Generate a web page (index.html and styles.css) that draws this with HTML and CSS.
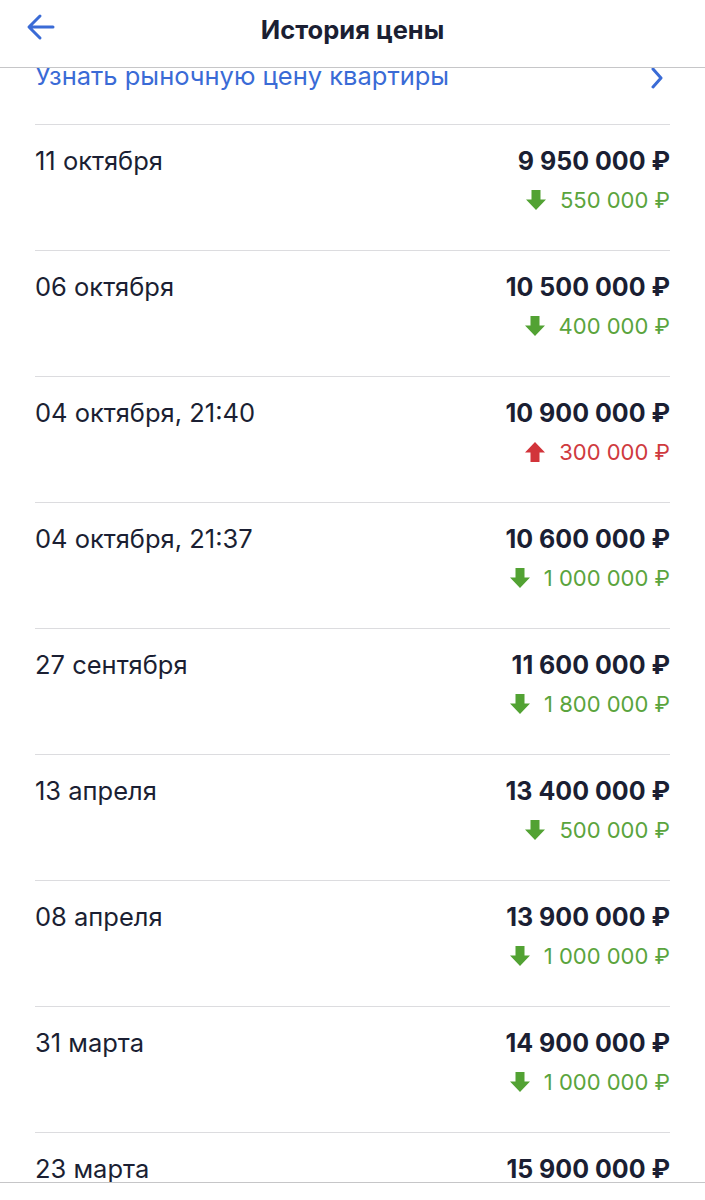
FILE: index.html
```html
<!DOCTYPE html>
<html lang="ru">
<head>
<meta charset="utf-8">
<link rel="stylesheet" href="styles.css">
</head>
<body>
<header class="topbar">
  <svg class="back" viewBox="0 0 30 28" width="30" height="28"><path d="M27 14H4M14 3L3 14l11 11" fill="none" stroke="#3a6bd6" stroke-width="3" stroke-linecap="round" stroke-linejoin="round"/></svg>
  <h1 class="title">История цены</h1>
</header>
<main class="content">
  <div class="link-row">
    <span class="link">Узнать рыночную цену квартиры</span>
    <svg class="chev" viewBox="0 0 14 22" width="14" height="22"><path d="M3 2l8 9-8 9" fill="none" stroke="#3a6bd6" stroke-width="3" stroke-linecap="round" stroke-linejoin="round"/></svg>
  </div>
  <div class="row"><span class="date">11 октября</span><div class="price"><span class="amount">9 950 000 ₽</span><span class="change down"><svg class="ar" viewBox="0 0 22 22"><path d="M6.5 1h9v9.5H21L11 21 1 10.5h5.5z"/></svg>550 000 ₽</span></div></div>
  <div class="row"><span class="date">06 октября</span><div class="price"><span class="amount">10 500 000 ₽</span><span class="change down"><svg class="ar" viewBox="0 0 22 22"><path d="M6.5 1h9v9.5H21L11 21 1 10.5h5.5z"/></svg>400 000 ₽</span></div></div>
  <div class="row"><span class="date">04 октября, 21:40</span><div class="price"><span class="amount">10 900 000 ₽</span><span class="change up"><svg class="ar" viewBox="0 0 22 22"><path d="M6.5 21h9v-9.5H21L11 1 1 11.5h5.5z"/></svg>300 000 ₽</span></div></div>
  <div class="row"><span class="date">04 октября, 21:37</span><div class="price"><span class="amount">10 600 000 ₽</span><span class="change down"><svg class="ar" viewBox="0 0 22 22"><path d="M6.5 1h9v9.5H21L11 21 1 10.5h5.5z"/></svg>1 000 000 ₽</span></div></div>
  <div class="row"><span class="date">27 сентября</span><div class="price"><span class="amount">11 600 000 ₽</span><span class="change down"><svg class="ar" viewBox="0 0 22 22"><path d="M6.5 1h9v9.5H21L11 21 1 10.5h5.5z"/></svg>1 800 000 ₽</span></div></div>
  <div class="row"><span class="date">13 апреля</span><div class="price"><span class="amount">13 400 000 ₽</span><span class="change down"><svg class="ar" viewBox="0 0 22 22"><path d="M6.5 1h9v9.5H21L11 21 1 10.5h5.5z"/></svg>500 000 ₽</span></div></div>
  <div class="row"><span class="date">08 апреля</span><div class="price"><span class="amount">13 900 000 ₽</span><span class="change down"><svg class="ar" viewBox="0 0 22 22"><path d="M6.5 1h9v9.5H21L11 21 1 10.5h5.5z"/></svg>1 000 000 ₽</span></div></div>
  <div class="row"><span class="date">31 марта</span><div class="price"><span class="amount">14 900 000 ₽</span><span class="change down"><svg class="ar" viewBox="0 0 22 22"><path d="M6.5 1h9v9.5H21L11 21 1 10.5h5.5z"/></svg>1 000 000 ₽</span></div></div>
  <div class="row"><span class="date">23 марта</span><div class="price"><span class="amount">15 900 000 ₽</span></div></div>
</main>
<div class="bottombar"></div>
</body>
</html>
```
FILE: styles.css
```css
* { box-sizing: border-box; }
html, body { margin: 0; padding: 0; background: #fff; }
body {
  font-family: Inter, "Noto Sans", sans-serif;
  color: #1b1f33;
  width: 705px;
  height: 1200px;
  overflow: hidden;
  position: relative;
}
.topbar {
  position: relative;
  z-index: 2;
  height: 68px;
  background: #fff;
  border-bottom: 1px solid #c6c6c8;
  display: flex;
  align-items: center;
  justify-content: center;
}
.back {
  position: absolute;
  left: 26px;
  top: 13px;
}
.title {
  margin: 0 0 8px 0;
  font-size: 25.5px;
  font-weight: 700;
  letter-spacing: 0;
}
.content {
  height: 1114px;
  overflow: hidden;
  padding: 0 35px;
}
.link-row {
  height: 56px;
  display: flex;
  justify-content: space-between;
  align-items: flex-start;
}
.link {
  color: #3a6bd6;
  font-size: 25.5px;
  line-height: 16px;
}
.chev { margin-right: 6px; margin-top: -1px; }
.row {
  height: 126px;
  border-top: 1px solid #dcdcdf;
  display: flex;
  justify-content: space-between;
  align-items: flex-start;
  padding-top: 21px;
}
.date {
  font-size: 25.5px;
  line-height: 30px;
}
.price {
  display: flex;
  flex-direction: column;
  align-items: flex-end;
}
.amount {
  font-size: 25px;
  font-weight: 700;
  line-height: 30px;
}
.change {
  display: flex;
  align-items: center;
  font-size: 22px;
  line-height: 26px;
  margin-top: 11px;
}
.ar { width: 22px; height: 22px; margin-right: 13px; }
.down { color: #5aa43d; }
.down .ar { fill: #52a233; }
.up { color: #cf3a3e; }
.up .ar { fill: #d2343a; }
.bottombar {
  position: absolute;
  left: 0; right: 0;
  top: 1182px;
  height: 18px;
  background: #fff;
  border-top: 1px solid #c6c6c8;
}
```
